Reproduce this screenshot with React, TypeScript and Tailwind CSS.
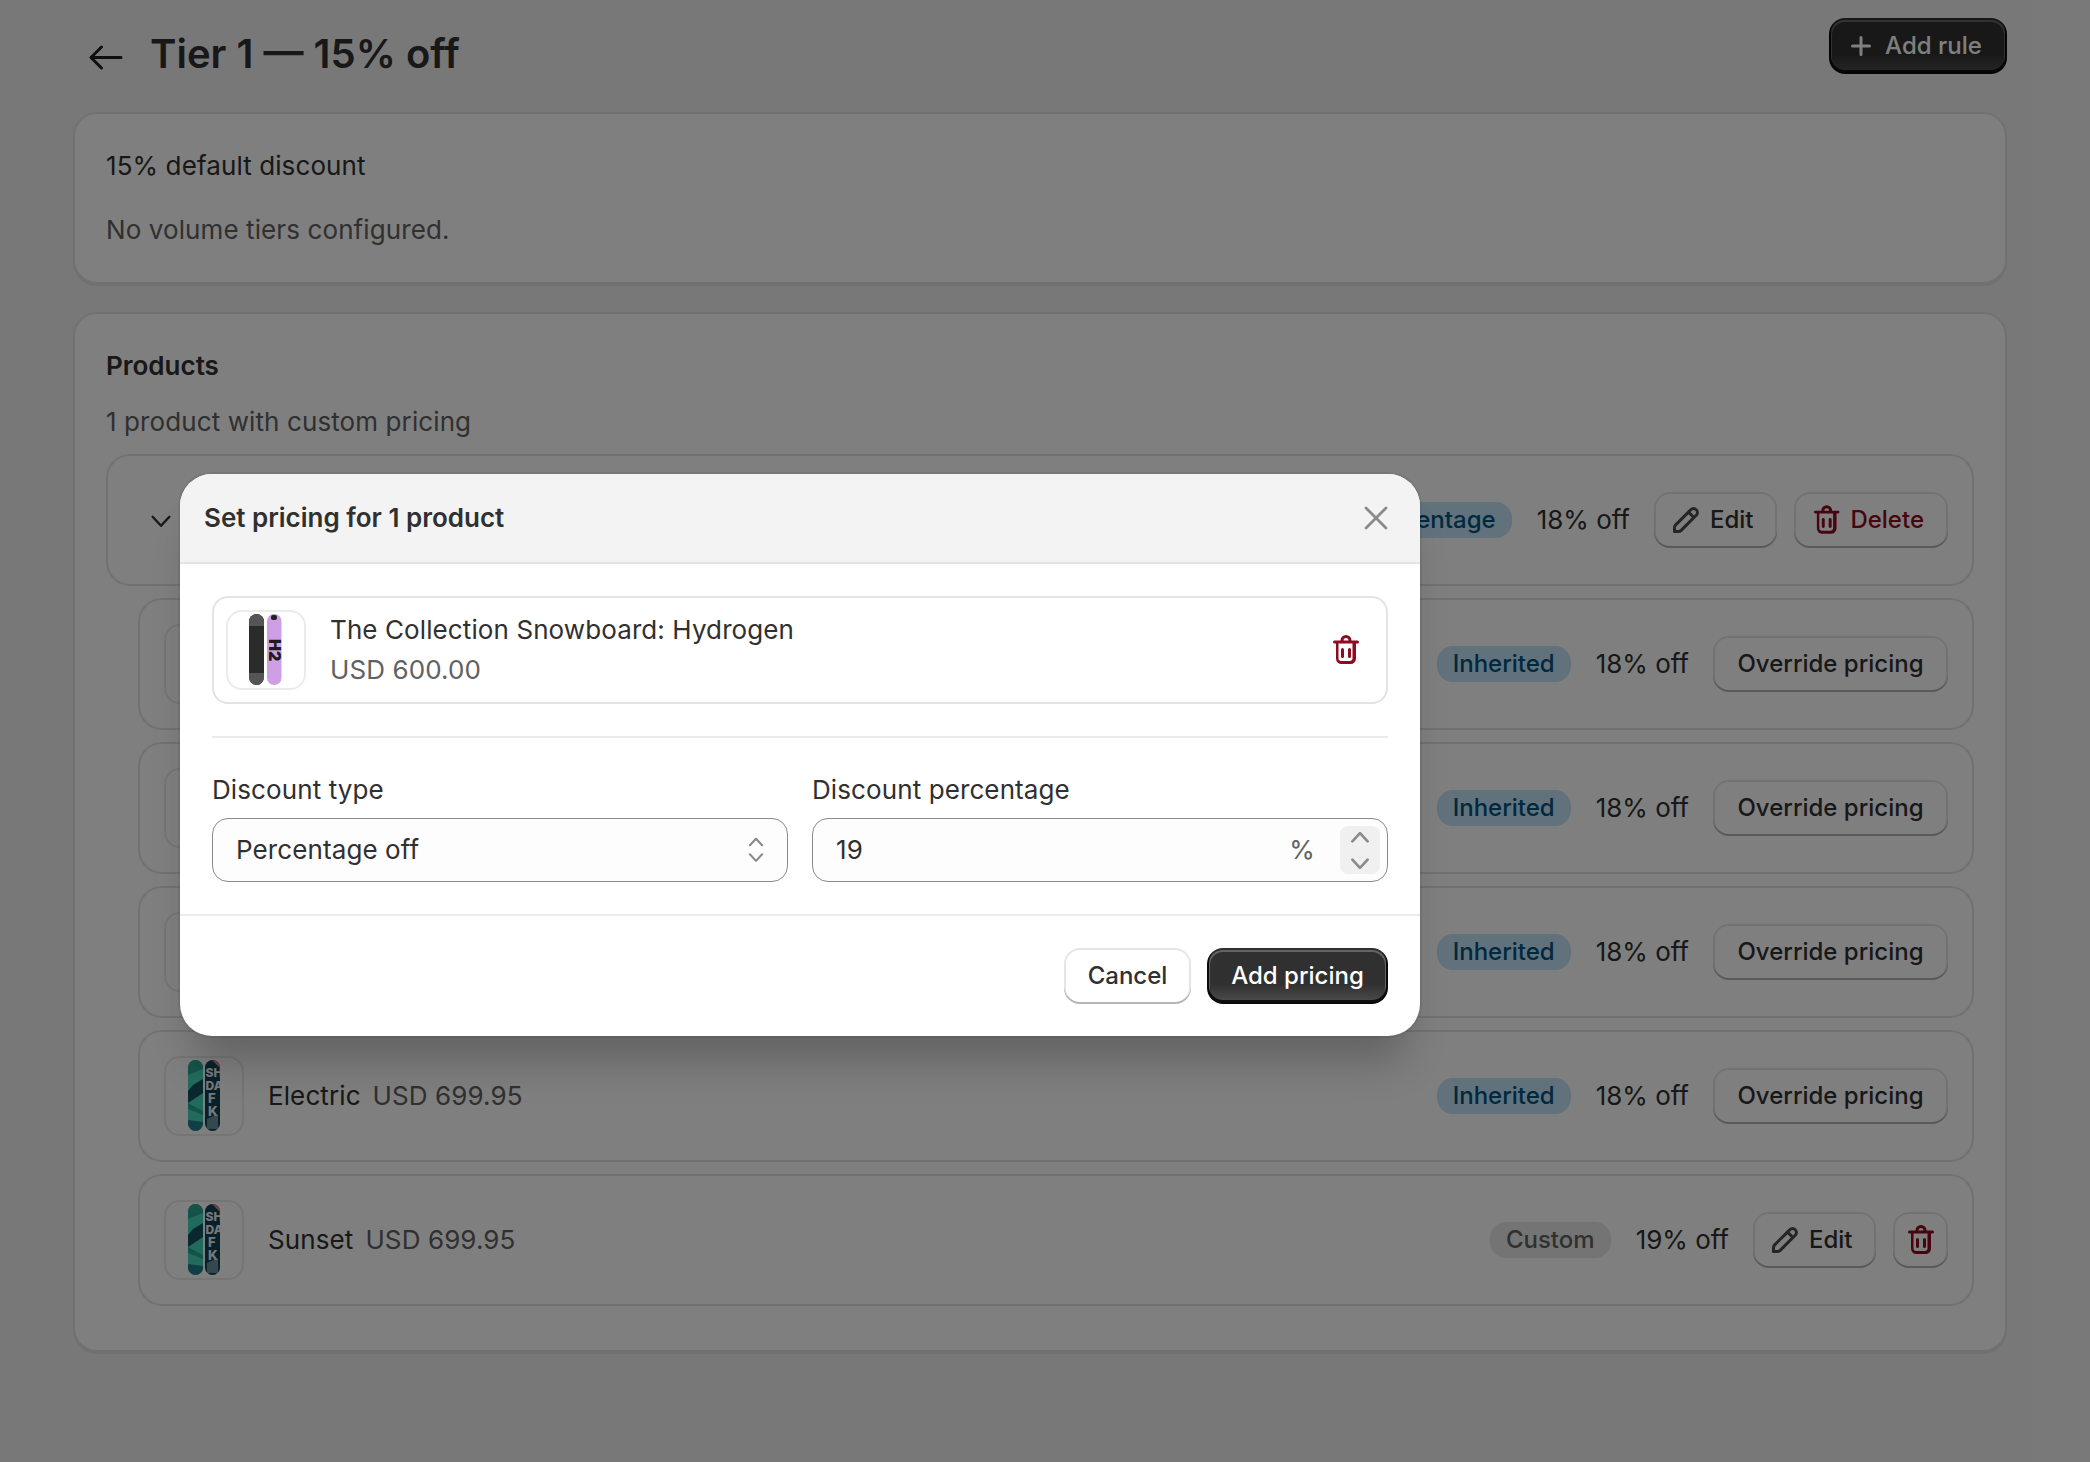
import React from "react";

type RowProps = {
  name?: string;
  price?: string;
  board: "hydrogen" | "shadow";
  badge: string;
  badgeTone: "info" | "plain";
  off: string;
  actions: React.ReactNode;
  expandable?: boolean;
};

const secondaryShadow =
  "shadow-[inset_0_-2px_0_0_#b5b5b5,inset_0_0_0_2px_rgba(0,0,0,0.1),inset_0_1px_0_3px_#fff]";
const primaryClasses =
  "bg-[#303030] bg-[linear-gradient(180deg,rgba(48,48,48,0)_63.53%,rgba(255,255,255,0.15)_100%)] shadow-[inset_0_-2px_0_2px_rgba(0,0,0,0.8),inset_0_0_0_2px_#303030,inset_0_1px_0_3px_rgba(255,255,255,0.25)]";

const TrashIcon = () => (
  <svg width="40" height="40" viewBox="0 0 20 20" fill="#8e0b21">
    <path d="M8.25 9a.75.75 0 0 1 .75.75v3.5a.75.75 0 0 1-1.5 0v-3.5a.75.75 0 0 1 .75-.75Z" />
    <path d="M11.75 9a.75.75 0 0 1 .75.75v3.5a.75.75 0 0 1-1.5 0v-3.5a.75.75 0 0 1 .75-.75Z" />
    <path
      fillRule="evenodd"
      d="M7.25 5.25a2.75 2.75 0 0 1 5.5 0h3a.75.75 0 0 1 0 1.5h-.75v7.5a2.75 2.75 0 0 1-2.75 2.75h-4.5a2.75 2.75 0 0 1-2.75-2.75v-7.5h-.75a.75.75 0 0 1 0-1.5h3Zm1.5 0a1.25 1.25 0 1 1 2.5 0h-2.5Zm-2.5 1.5v7.5c0 .69.56 1.25 1.25 1.25h4.5c.69 0 1.25-.56 1.25-1.25v-7.5h-7Z"
    />
  </svg>
);

const EditIcon = () => (
  <svg width="40" height="40" viewBox="0 0 20 20" fill="#4a4a4a">
    <path
      fillRule="evenodd"
      d="M15.655 4.344a2.695 2.695 0 0 0-3.81 0l-.599.599-.009-.009-1.06 1.06.008.01-5.88 5.88a2.75 2.75 0 0 0-.805 1.944v1.922a.75.75 0 0 0 .75.75h1.922a2.75 2.75 0 0 0 1.944-.806l7.54-7.539a2.695 2.695 0 0 0 0-3.81Zm-4.409 2.72-5.88 5.88a1.25 1.25 0 0 0-.366.884v1.172h1.172c.331 0 .65-.132.883-.366l5.88-5.88-1.689-1.69Zm2.75.629.599-.599a1.195 1.195 0 1 0-1.69-1.689l-.598.599 1.69 1.689Z"
    />
  </svg>
);

const PlusIcon = () => (
  <svg width="40" height="40" viewBox="0 0 20 20" fill="#ffffff">
    <path d="M10.75 5.75a.75.75 0 0 0-1.5 0v3.5h-3.5a.75.75 0 0 0 0 1.5h3.5v3.5a.75.75 0 0 0 1.5 0v-3.5h3.5a.75.75 0 0 0 0-1.5h-3.5v-3.5Z" />
  </svg>
);

const Chevron = ({
  up,
  size = 18,
  color = "#8a8a8a",
  weight = 2.4,
}: {
  up?: boolean;
  size?: number;
  color?: string;
  weight?: number;
}) => (
  <svg width={size} height={size * 0.6} viewBox="0 0 18 11" fill="none" stroke={color} strokeWidth={weight} strokeLinecap="round" strokeLinejoin="round">
    <path d={up ? "M2 9.5 9 2l7 7.5" : "M2 1.5 9 9l7-7.5"} />
  </svg>
);

const BoardThumb = ({ kind }: { kind: "hydrogen" | "shadow" }) => (
  <div className="w-[80px] h-[80px] shrink-0 rounded-[16px] border-2 border-[#ebebeb] bg-white overflow-hidden">
    {kind === "hydrogen" ? (
      <svg width="76" height="76" viewBox="0 0 76 76">
        <rect x="21" y="2" width="15" height="71" rx="7.5" fill="#2b2b2b" />
        <path d="M21 14v-4.5a7.5 7.5 0 0 1 15 0V14Z" fill="#555" />
        <path d="M21 61v4.5a7.5 7.5 0 0 0 15 0V61Z" fill="#555" />
        <rect x="39" y="2" width="14.5" height="71" rx="7.2" fill="#cf9fe6" />
        <rect x="43" y="3" width="6" height="5" rx="2" fill="#222" />
        <text x="0" y="0" transform="translate(41 27) rotate(90)" fontFamily="Inter, sans-serif" fontWeight="900" fontSize="16" fill="#1c1c1c">H2</text>
      </svg>
    ) : (
      <svg width="76" height="76" viewBox="0 0 76 76">
        <defs>
          <clipPath id="boardA">
            <rect x="22" y="2" width="15" height="71" rx="7.5" />
          </clipPath>
          <clipPath id="boardB">
            <rect x="39" y="2" width="15" height="71" rx="7.5" />
          </clipPath>
        </defs>
        <g clipPath="url(#boardA)">
          <rect x="22" y="2" width="15" height="71" fill="#42d6bb" />
          <path d="M22 2h15v9l-15 6Z" fill="#2aa795" />
          <path d="M27 27l10-6v14l-15 10v-12Z" fill="#14505f" />
          <path d="M22 45l15 8v4l-15-6Z" fill="#2aa795" />
          <path d="M22 62l15 2v9H22Z" fill="#1e7f88" />
        </g>
        <g clipPath="url(#boardB)">
          <rect x="39" y="2" width="15" height="71" fill="#0f4359" />
          <path d="M39 2h15v8l-8-8Z" fill="#e4808c" />
          <path d="M41 61l11-5v15h-11Z" fill="#6c8f9c" />
          <text x="39.5" y="19" fontFamily="Inter, sans-serif" fontWeight="800" fontSize="12" fill="#f0f0f0">SH</text>
          <text x="39.5" y="32" fontFamily="Inter, sans-serif" fontWeight="800" fontSize="12" fill="#f0f0f0">DA</text>
          <text x="42" y="45" fontFamily="Inter, sans-serif" fontWeight="800" fontSize="13" fill="#f0f0f0">F</text>
          <text x="42" y="58" fontFamily="Inter, sans-serif" fontWeight="800" fontSize="13" fill="#f0f0f0">K</text>
        </g>
      </svg>
    )}
  </div>
);

const SecondaryButton = ({ children, className = "" }: { children: React.ReactNode; className?: string }) => (
  <button className={`h-[56px] rounded-[16px] bg-white flex items-center justify-center text-[24px] font-[550] tracking-normal ${secondaryShadow} ${className}`}>
    {children}
  </button>
);

const EditButton = () => (
  <SecondaryButton className="w-[123px] pl-[12px] pr-[23px] justify-start text-[#303030]">
    <EditIcon />
    <span className="ml-[4px]">Edit</span>
  </SecondaryButton>
);

const ProductRow = ({ name, price, board, badge, badgeTone, off, actions, expandable }: RowProps) => (
  <div className={`h-[132px] rounded-[24px] border-2 border-[#e3e3e3] bg-white flex items-center pl-[24px] pr-[24px] ${expandable ? "" : "ml-[32px]"}`}>
    {expandable && (
      <div className="ml-[18px] mr-[22px] mt-[3px]">
        <Chevron size={22} color="#303030" weight={2} />
      </div>
    )}
    <BoardThumb kind={board} />
    {name && <span className="ml-[24px] text-[#303030]">{name}</span>}
    {price && <span className="ml-[12px] text-[#616161]">{price}</span>}
    <div className="ml-auto flex items-center">
      <span
        className={`h-[36px] rounded-[16px] px-[16px] flex items-center text-[24px] font-[550] tracking-normal ${
          badgeTone === "info" ? "bg-[#c4e4f8] text-[#00527c]" : "bg-[#e8e8e8] text-[#616161]"
        }`}
      >
        {badge}
      </span>
      <span className="ml-[25px] mr-[24px] text-[#303030] tracking-normal">{off}</span>
      {actions}
    </div>
  </div>
);

const OverrideButton = () => <SecondaryButton className="w-[235px] text-[#303030]">Override pricing</SecondaryButton>;

export default function App() {
  return (
    <div className="relative w-[2090px] h-[1462px] overflow-hidden bg-[#f1f1f1] font-['Inter',sans-serif] text-[26px] leading-[40px] font-normal tracking-[0.1px]">
      {/* Page behind the modal */}
      <div className="pl-[73px] pr-[83px] pt-[17px]">
        <div className="h-[56px] flex items-center">
          <svg width="34" height="26" viewBox="0 0 34 26" fill="none" stroke="#1f1f1f" strokeWidth="3" strokeLinecap="round" strokeLinejoin="round" className="ml-[16px] mt-[24px]">
            <path d="M32 13.5H2.5M12.5 3 2 13.5 12.5 24" />
          </svg>
          <h1 className="ml-[27px] mt-[18px] text-[40px] leading-[48px] font-[600] tracking-normal text-[#303030]">Tier 1 — 15% off</h1>
          <button className={`ml-auto mt-[2px] w-[178px] h-[56px] pr-[13px] rounded-[16px] flex items-center justify-center text-[24px] tracking-normal text-white font-[550] ${primaryClasses}`}>
            <PlusIcon />
            <span className="ml-[4px]">Add rule</span>
          </button>
        </div>

        <div className="mt-[39px] h-[172px] rounded-[24px] bg-white border-2 border-[#e3e3e3] px-[31px] pt-[32px] shadow-[0_2px_0_rgba(26,26,26,0.07)]">
          <p className="text-[#303030]">15% default discount</p>
          <p className="mt-[24px] text-[#616161]">No volume tiers configured.</p>
        </div>

        <div className="mt-[28px] h-[1040px] rounded-[24px] bg-white border-2 border-[#e3e3e3] px-[31px] pt-[32px] shadow-[0_2px_0_rgba(26,26,26,0.07)]">
          <h2 className="text-[#303030] font-[600] tracking-normal">Products</h2>
          <p className="mt-[16px] text-[#616161]">1 product with custom pricing</p>
          <div className="mt-[12px] flex flex-col gap-[12px]">
            <ProductRow
              expandable
              board="hydrogen"
              badge="Percentage"
              badgeTone="info"
              off="18% off"
              actions={
                <div className="flex gap-[17px]">
                  <EditButton />
                  <SecondaryButton className="w-[154px] pl-[13px] pr-[24px] justify-start text-[#8e0b21]">
                    <TrashIcon />
                    <span className="ml-[4px]">Delete</span>
                  </SecondaryButton>
                </div>
              }
            />
            <ProductRow board="hydrogen" badge="Inherited" badgeTone="info" off="18% off" actions={<OverrideButton />} />
            <ProductRow board="hydrogen" badge="Inherited" badgeTone="info" off="18% off" actions={<OverrideButton />} />
            <ProductRow board="hydrogen" badge="Inherited" badgeTone="info" off="18% off" actions={<OverrideButton />} />
            <ProductRow name="Electric" price="USD 699.95" board="shadow" badge="Inherited" badgeTone="info" off="18% off" actions={<OverrideButton />} />
            <ProductRow
              name="Sunset"
              price="USD 699.95"
              board="shadow"
              badge="Custom"
              badgeTone="plain"
              off="19% off"
              actions={
                <div className="flex gap-[17px]">
                  <EditButton />
                  <SecondaryButton className="w-[55px]">
                    <TrashIcon />
                  </SecondaryButton>
                </div>
              }
            />
          </div>
        </div>
      </div>

      {/* Backdrop and modal */}
      <div className="absolute inset-0 bg-black/50">
        <div className="ml-[180px] mt-[474px] w-[1240px] h-[562px] rounded-[32px] bg-white overflow-hidden flex flex-col shadow-[0_40px_40px_-16px_rgba(26,26,26,0.28),0_0_0_2px_rgba(0,0,0,0.06)]">
          <div className="h-[90px] shrink-0 bg-[#f3f3f3] border-b-2 border-[#e3e3e3] flex items-center justify-between pl-[24px] pr-[32px]">
            <h2 className="text-[#303030] font-[600] tracking-normal">Set pricing for 1 product</h2>
            <svg width="24" height="24" viewBox="0 0 24 24" fill="none" stroke="#8a8a8a" strokeWidth="2.8" strokeLinecap="round">
              <path d="M2 2l20 20M22 2 2 22" />
            </svg>
          </div>

          <div className="px-[32px] pt-[32px]">
            <div className="h-[108px] rounded-[16px] border-2 border-[#e3e3e3] flex items-center pl-[12px] pr-[20px]">
              <BoardThumb kind="hydrogen" />
              <div className="ml-[24px] flex-1">
                <p className="text-[#303030]">The Collection Snowboard: Hydrogen</p>
                <p className="text-[#616161]">USD 600.00</p>
              </div>
              <TrashIcon />
            </div>
            <div className="mt-[32px] h-[2px] bg-[#ebebeb]" />
            <div className="mt-[32px] grid grid-cols-2 gap-[24px]">
              <label className="block text-[#303030]">
                Discount type
                <div className="mt-[8px] h-[64px] rounded-[16px] border border-[#8a8a8a] bg-[#fdfdfd] flex items-center justify-between pl-[23px] pr-[23px]">
                  <span>Percentage off</span>
                  <span className="flex flex-col items-center gap-[6px]">
                    <Chevron up size={16} />
                    <Chevron size={16} />
                  </span>
                </div>
              </label>
              <label className="block text-[#303030]">
                Discount percentage
                <div className="mt-[8px] h-[64px] rounded-[16px] border border-[#8a8a8a] bg-[#fdfdfd] flex items-center pl-[23px] pr-[7px]">
                  <span className="flex-1">19</span>
                  <span className="text-[#616161]">%</span>
                  <span className="ml-[25px] w-[40px] h-[48px] rounded-[8px] bg-[#f0f0f0] flex flex-col items-center justify-center gap-[15px]">
                    <Chevron up size={20} />
                    <Chevron size={20} />
                  </span>
                </div>
              </label>
            </div>
          </div>

          <div className="mt-[32px] border-t-2 border-[#ebebeb] flex justify-end gap-[16px] px-[32px] pt-[32px]">
            <SecondaryButton className="w-[127px] text-[#303030]">Cancel</SecondaryButton>
            <button className={`w-[181px] h-[56px] rounded-[16px] text-[24px] tracking-normal text-white font-[550] ${primaryClasses}`}>
              Add pricing
            </button>
          </div>
        </div>
      </div>
    </div>
  );
}
